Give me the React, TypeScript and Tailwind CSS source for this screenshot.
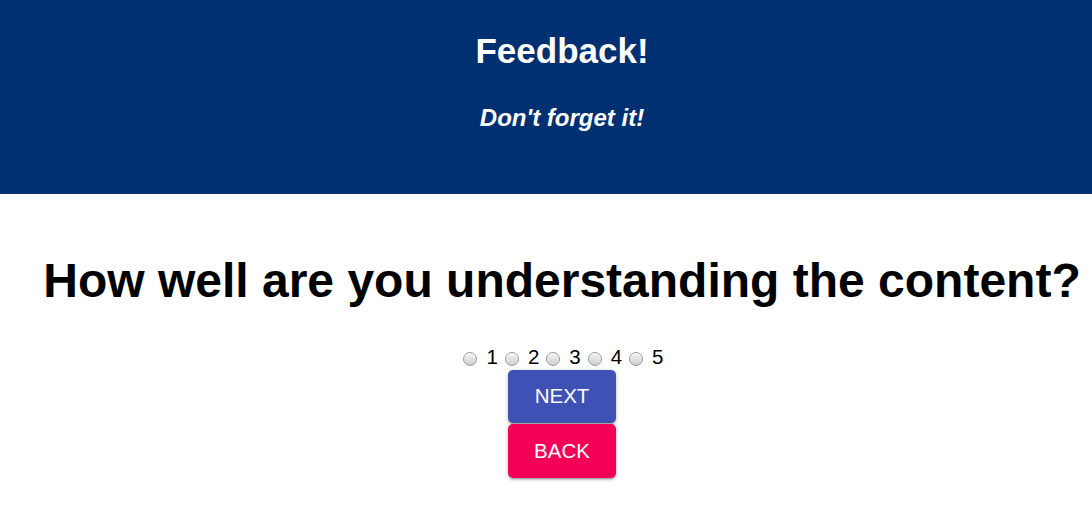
import React, { useState } from 'react';

const ratings = [1, 2, 3, 4, 5];

export default function App() {
  const [rating, setRating] = useState<number | null>(null);

  return (
    <div className="min-h-screen bg-white pl-8 font-['Liberation_Sans',Arial,sans-serif] text-black">
      {/* Header banner */}
      <header className="-ml-8 flex h-[194px] flex-col items-center bg-[#013072] pl-8 pt-[31px] text-white">
        <h1 className="text-[35px] font-bold leading-[40px]">Feedback!</h1>
        <h2 className="mt-[33px] text-[24px] font-bold italic leading-[28px]">Don't forget it!</h2>
      </header>

      <main className="flex flex-col items-center pt-[60px]">
        <h1 className="whitespace-nowrap text-[48px] font-bold leading-[54px]">
          How well are you understanding the content?
        </h1>

        <div className="mt-[37px] flex items-baseline text-[20.5px] leading-[24px]">
          {ratings.map((n) => (
            <label key={n} className="flex cursor-pointer items-baseline">
              <input
                type="radio"
                name="rating"
                checked={rating === n}
                onChange={() => setRating(n)}
                className="relative top-[2px] mr-[9px] ml-[5px] h-[14px] w-[14px] cursor-pointer appearance-none rounded-full border border-[#9a9a9a] bg-gradient-to-b from-[#f4f4f4] to-[#cfcfcf] shadow-[inset_0_1px_1px_rgba(255,255,255,0.8)] checked:from-[#6aa9f5] checked:to-[#2f7de1]"
              />
              <span className="mr-[2px]">{n}</span>
            </label>
          ))}
        </div>

        <div className="mt-[1px] flex flex-col">
          <button className="flex h-[53px] w-[108px] items-center justify-center rounded-[5px] bg-[#3f51b5] text-[20.5px] text-white uppercase shadow-[0_1px_5px_rgba(0,0,0,0.2),0_2px_2px_rgba(0,0,0,0.14),0_3px_1px_-2px_rgba(0,0,0,0.12)]">
            Next
          </button>
          <button className="mt-[1px] flex h-[54px] w-[108px] items-center justify-center rounded-[5px] bg-[#f50057] text-[20.5px] text-white uppercase shadow-[0_1px_5px_rgba(0,0,0,0.2),0_2px_2px_rgba(0,0,0,0.14),0_3px_1px_-2px_rgba(0,0,0,0.12)]">
            Back
          </button>
        </div>
      </main>
    </div>
  );
}
